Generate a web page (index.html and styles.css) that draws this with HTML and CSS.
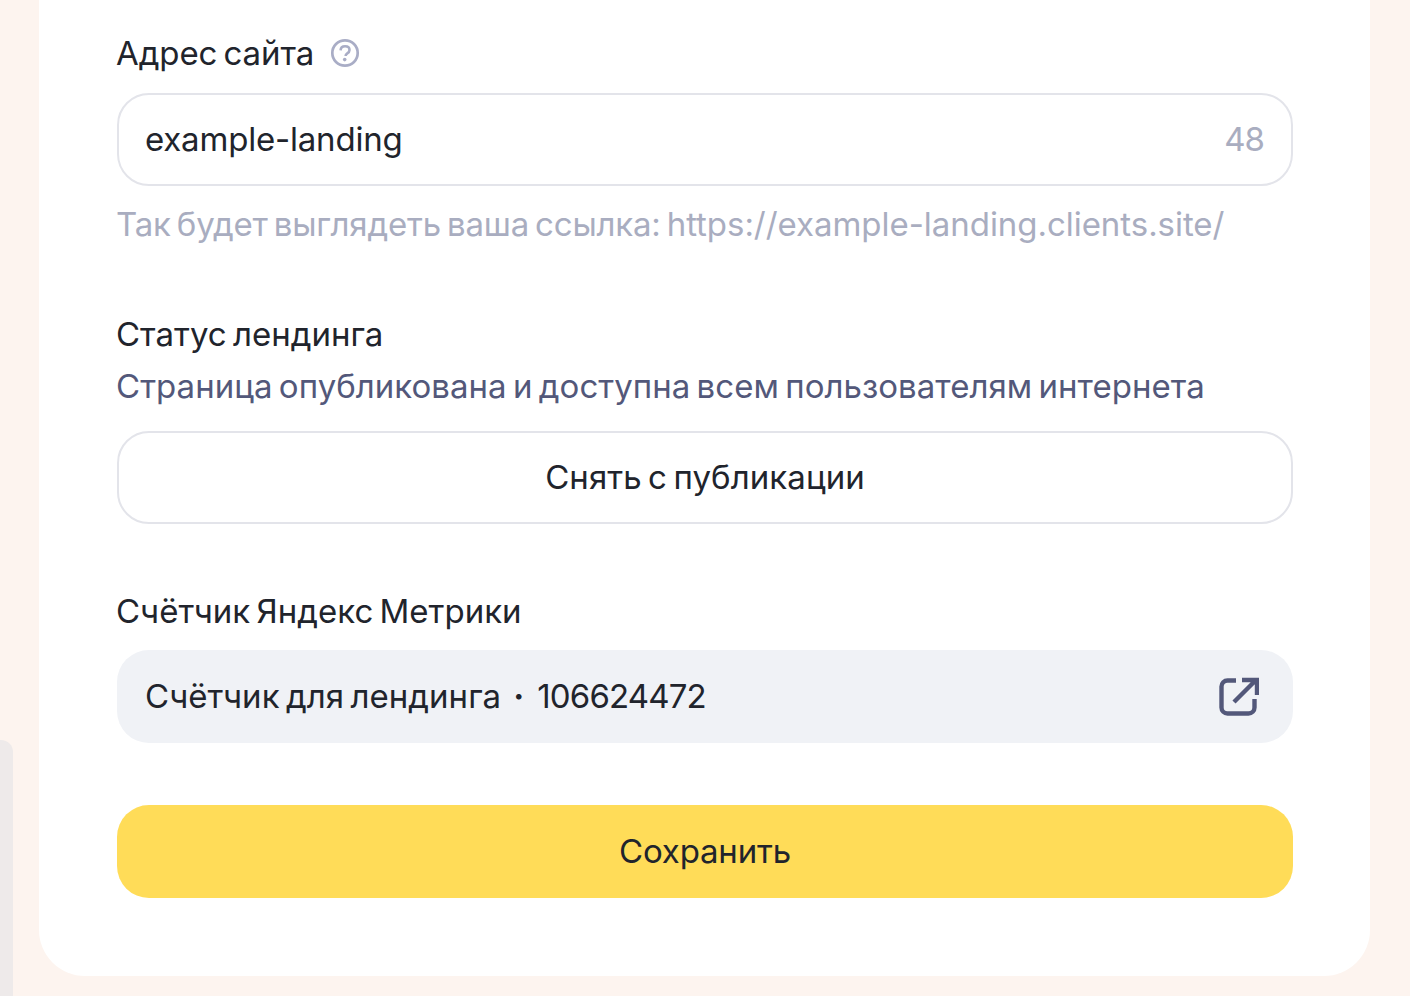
FILE: index.html
```html
<!DOCTYPE html>
<html lang="ru">
  <head>
    <meta charset="UTF-8" />
    <meta name="viewport" content="width=device-width, initial-scale=1.0" />
    <title>Настройки лендинга</title>
    <link rel="stylesheet" href="styles.css">
  </head>
  <body>
    <div class="side"></div>
    <div class="card">
      <div class="labelRow">
        <div class="label siteLabel">Адрес сайта</div>
        <svg class="help" viewBox="0 0 30 30" fill="none">
          <circle cx="15" cy="15" r="12.7" stroke="#a9adc6" stroke-width="2.7" />
          <path d="M10.6 12.4c.1-2.6 2-4.1 4.5-4.1 2.6 0 4.4 1.5 4.4 3.7 0 1.6-.9 2.6-2.2 3.4-1.2.8-1.7 1.3-1.7 2.6" stroke="#a9adc6" stroke-width="2.6" />
          <circle cx="14.7" cy="21.6" r="1.8" fill="#a9adc6" />
        </svg>
      </div>
      <div class="input">
        <span class="value">example-landing</span>
        <span class="count">48</span>
      </div>
      <div class="hint">Так будет выглядеть ваша ссылка: <span class="link">https://example-landing.clients.site/</span></div>

      <div class="label statusLabel">Статус лендинга</div>
      <div class="status">Страница опубликована и доступна всем пользователям интернета</div>
      <div class="btn outline">Снять с публикации</div>

      <div class="label metrikaLabel">Счётчик Яндекс Метрики</div>
      <div class="metrika">
        <span>Счётчик для лендинга<span class="dot">·</span><span class="number">106624472</span></span>
        <svg class="open" viewBox="0 0 40 40" fill="none">
          <path d="M17 3.5H8.5a6 6 0 0 0-6 6v21a6 6 0 0 0 6 6h21a6 6 0 0 0 6-6V22" stroke="#53587a" stroke-width="4.4" />
          <path d="M15 25 36 4M23 3h15v15" stroke="#53587a" stroke-width="4.4" />
        </svg>
      </div>
      <div class="btn save">Сохранить</div>
    </div>
  </body>
</html>
```

FILE: styles.css
```css
* {
  box-sizing: border-box;
  font-family: Inter, "Liberation Sans", sans-serif;
}
body {
  margin: 0;
  height: 996px;
  overflow: hidden;
  background-color: #fdf4ef;
  color: #21242c;
  font-size: 33px;
  word-spacing: -3px;
}
.side {
  position: absolute;
  left: 0;
  top: 740px;
  bottom: 0;
  width: 13px;
  background-color: #eeeaea;
  border-top-right-radius: 12px;
}
.card {
  width: 1331px;
  height: 976px;
  margin-left: 39px;
  padding: 33px 77px 0 78px;
  background-color: white;
  border-radius: 0 0 46px 46px;
}
.labelRow {
  display: flex;
  align-items: center;
  gap: 16px;
}
.label {
  margin-left: -1px;
  line-height: 40px;
}
.siteLabel {
  letter-spacing: -0.1px;
}
.help {
  width: 30px;
  height: 30px;
}
.input {
  display: flex;
  justify-content: space-between;
  align-items: center;
  height: 93px;
  margin-top: 20px;
  padding: 0 27px 2px 26px;
  border: 2px solid #e3e4ea;
  border-radius: 32px;
}
.value {
  letter-spacing: -0.2px;
}
.count {
  color: #a9adc0;
  letter-spacing: -1px;
}
.hint {
  margin-top: 18px;
  margin-left: -1px;
  line-height: 40px;
  letter-spacing: -0.2px;
  color: #a9adc0;
}
.link {
  letter-spacing: -0.04px;
}
.statusLabel {
  margin-top: 70px;
}
.status {
  margin-top: 12px;
  margin-left: -1px;
  line-height: 40px;
  letter-spacing: 0.03px;
  color: #53587a;
}
.btn {
  display: flex;
  justify-content: center;
  align-items: center;
  height: 93px;
  padding-bottom: 2px;
  border-radius: 32px;
}
.outline {
  margin-top: 25px;
  border: 2px solid #e3e4ea;
  letter-spacing: 0.08px;
}
.metrikaLabel {
  margin-top: 67px;
}
.metrika {
  display: flex;
  justify-content: space-between;
  align-items: center;
  height: 93px;
  margin-top: 19px;
  padding: 0 34px 2px 28px;
  border-radius: 32px;
  background-color: #f0f2f6;
  letter-spacing: 0.05px;
}
.dot {
  margin: 0 13px 0 12px;
  font-weight: bold;
}
.number {
  letter-spacing: -0.85px;
}
.open {
  width: 40px;
  height: 40px;
  margin-bottom: -2px;
}
.save {
  margin-top: 62px;
  background-color: #ffdc58;
  letter-spacing: -0.2px;
}
```
